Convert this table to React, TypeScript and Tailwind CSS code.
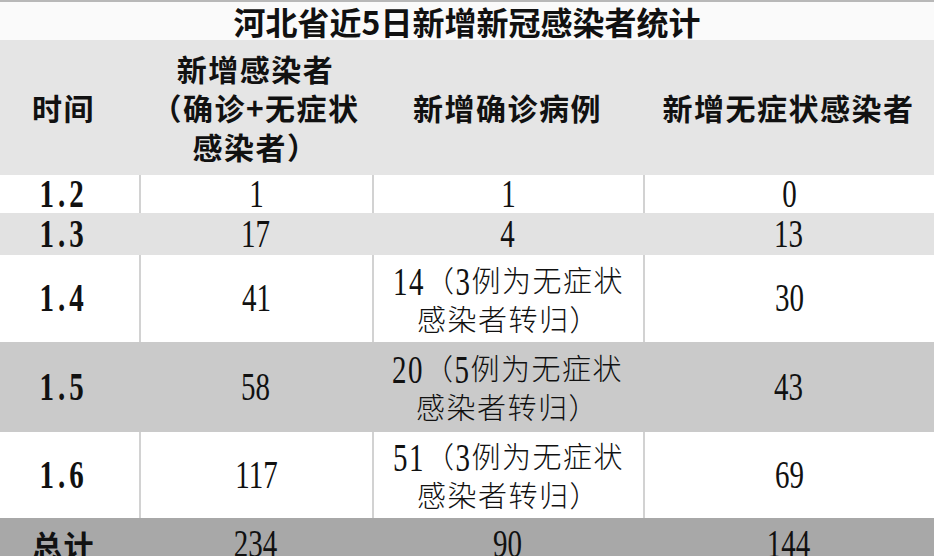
import type { ReactNode } from "react";

const cols = "grid grid-cols-[139px_233px_271px_1fr]";
const cjkBold = "font-['Noto_Sans_CJK_SC',sans-serif] font-bold";
const cjk = "font-['Noto_Sans_CJK_SC',sans-serif] font-light";

const Num = ({ children, bold }: { children: ReactNode; bold?: boolean }) => (
  <span
    className={
      "inline-block scale-y-[1.36] font-['Liberation_Serif',serif] text-[29px] leading-none " +
      (bold ? "font-bold tracking-[4px] scale-y-[1.24]" : "")
    }
  >
    {children}
  </span>
);

interface Row {
  date: string;
  total: string;
  confirmed: ReactNode;
  asym: string;
  bg: string;
  h: string;
  white: boolean;
}

const Converted = ({ n, k }: { n: string; k: string }) => (
  <div className={`${cjk} text-[29px] tracking-[1.5px] leading-[39px] text-center`}>
    <div>
      <Num>{n}</Num>（<Num>{k}</Num>例为无症状
    </div>
    <div>感染者转归）</div>
  </div>
);

const rows: Row[] = [
  { date: "1.2", total: "1", confirmed: <Num>1</Num>, asym: "0", bg: "bg-white", h: "h-[38px]", white: true },
  { date: "1.3", total: "17", confirmed: <Num>4</Num>, asym: "13", bg: "bg-[#e2e2e2]", h: "h-[42px]", white: false },
  { date: "1.4", total: "41", confirmed: <Converted n="14" k="3" />, asym: "30", bg: "bg-white", h: "h-[87px]", white: true },
  { date: "1.5", total: "58", confirmed: <Converted n="20" k="5" />, asym: "43", bg: "bg-[#cacaca]", h: "h-[90px]", white: false },
  { date: "1.6", total: "117", confirmed: <Converted n="51" k="3" />, asym: "69", bg: "bg-white", h: "h-[86px]", white: true },
];

export default function App() {
  return (
    <div className="w-[934px] h-[556px] overflow-hidden bg-white text-[#111]">
      {/* title */}
      <div className="h-[40px] border-t-2 border-[#b8b8b8] bg-[#fafafa] flex items-center justify-center">
        <span className={`${cjkBold} text-[32px] tracking-[0px] leading-[38px]`}>
          河北省近5日新增新冠感染者统计
        </span>
      </div>

      {/* header */}
      <div className={`${cols} h-[135px] bg-[#e5e5e5] ${cjkBold} text-[30px] leading-[39px] tracking-[1.5px]`}>
        <div className="flex items-center justify-center pr-[12px]">时间</div>
        <div className="flex items-center justify-center text-center">
          <div>
            新增感染者
            <br />
            （确诊+无症状
            <br />
            感染者）
          </div>
        </div>
        <div className="flex items-center justify-center">新增确诊病例</div>
        <div className="flex items-center justify-center">新增无症状感染者</div>
      </div>

      {rows.map((r) => {
        const sep = r.white ? "border-l-2 border-[#d2d2d2]" : "";
        return (
          <div key={r.date} className={`${cols} ${r.h} ${r.bg}`}>
            <div className="flex items-center justify-center pr-[12px]">
              <Num bold>{r.date}</Num>
            </div>
            <div className={`flex items-center justify-center ${sep}`}>
              <Num>{r.total}</Num>
            </div>
            <div className={`flex items-center justify-center ${sep}`}>{r.confirmed}</div>
            <div className={`flex items-center justify-center ${sep}`}>
              <Num>{r.asym}</Num>
            </div>
          </div>
        );
      })}

      {/* totals */}
      <div className={`${cols} h-[52px] bg-[#a8a8a8]`}>
        <div className={`flex items-center justify-center pr-[12px] ${cjkBold} text-[30px] tracking-[1.5px]`}>
          总计
        </div>
        <div className="flex items-center justify-center">
          <Num>234</Num>
        </div>
        <div className="flex items-center justify-center">
          <Num>90</Num>
        </div>
        <div className="flex items-center justify-center">
          <Num>144</Num>
        </div>
      </div>
    </div>
  );
}
